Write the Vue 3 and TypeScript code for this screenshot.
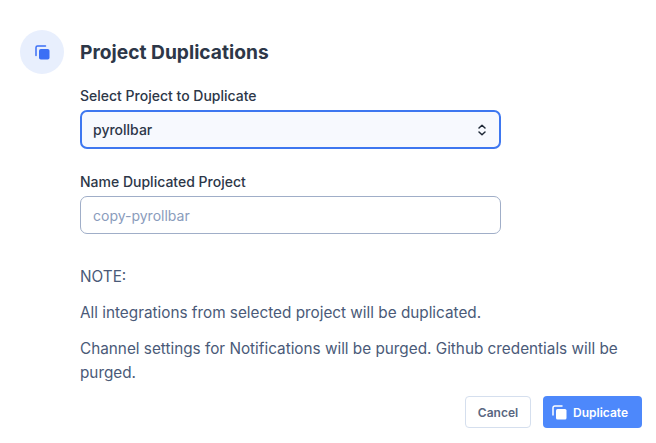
<template>
  <div class="modal">
    <div class="icon-wrap">
      <svg class="head-icon" width="15" height="15" viewBox="0 0 15 15">
        <path d="M1 10.500V2.500A1.500 1.500 0 0 1 2.500 1H10.500" fill="none" stroke="currentColor" stroke-width="1.500" stroke-linecap="round" />
        <rect x="4" y="4" width="10.500" height="10.500" rx="1.800" fill="currentColor" />
      </svg>
    </div>
    <div class="body">
      <h2 class="title">Project Duplications</h2>
      <label class="label">Select Project to Duplicate</label>
      <div class="select">
        <span>pyrollbar</span>
        <svg width="12" height="14" viewBox="0 0 12 14">
          <path d="M3 5L6 2.200L9 5M3 9L6 11.800L9 9" fill="none" stroke="#1f2937" stroke-width="1.500" stroke-linecap="round" stroke-linejoin="round" />
        </svg>
      </div>
      <label class="label second">Name Duplicated Project</label>
      <div class="input">copy-pyrollbar</div>
      <p class="note first">NOTE:</p>
      <p class="note">All integrations from selected project will be duplicated.</p>
      <p class="note">Channel settings for Notifications will be purged. Github credentials will be purged.</p>
    </div>
    <div class="actions">
      <button class="btn cancel">Cancel</button>
      <button class="btn primary">
        <svg width="15" height="15" viewBox="0 0 15 15">
          <path d="M1 10V2.800A1.800 1.800 0 0 1 2.800 1H10" fill="none" stroke="#fff" stroke-width="1.500" stroke-linecap="round" />
          <rect x="4" y="4" width="10.500" height="10.500" rx="1.500" fill="#fff" />
        </svg>
        Duplicate
      </button>
    </div>
  </div>
</template>

<script setup lang="ts">
</script>

<style>
html, body { background: #fff; }
</style>

<style scoped>
.modal {
  position: relative;
  width: 656px;
  height: 443px;
  box-sizing: border-box;
  padding: 30px 30px 0 20px;
  display: flex;
  gap: 16px;
  font-family: Inter, "Liberation Sans", sans-serif;
  background: #fff;
  overflow: hidden;
}
.icon-wrap {
  width: 44px;
  height: 44px;
  border-radius: 50%;
  background: #e8effd;
  color: #3b6ff5;
  display: flex;
  align-items: center;
  justify-content: center;
  flex-shrink: 0;
}
.body { flex: 1; min-width: 0; }
.title {
  margin: 0;
  font-size: 19.200px;
  line-height: 28px;
  font-weight: 700;
  color: #2d3748;
  padding-top: 8px;
}
.label {
  display: block;
  margin-top: 20px;
  font-size: 14px;
  line-height: 20px;
  font-weight: 500;
  color: #2d3748;
}
.label.second { margin-top: 23px; }
.select, .input {
  box-sizing: border-box;
  width: 421px;
  height: 39px;
  margin-top: 4px;
  border-radius: 7px;
  font-size: 14px;
  display: flex;
  align-items: center;
  padding: 0 12px;
}
.select {
  justify-content: space-between;
  background: #f7f9fe;
  border: 2px solid #3e77f0;
  color: #2d3748;
  font-weight: 500;
  padding: 0 11px;
}
.input {
  height: 38px;
  border: 1px solid #a0aec8;
  color: #8a9cbc;
  background: #fff;
}
.note {
  margin: 12px 0 0;
  font-size: 15.300px;
  line-height: 24px;
  color: #4a5a78;
}
.note.first { margin-top: 31px; }
.actions {
  position: absolute;
  right: 14px;
  bottom: 15px;
  display: flex;
  gap: 12px;
}
.btn {
  box-sizing: border-box;
  height: 32px;
  border-radius: 4px;
  font-family: inherit;
  font-size: 12px;
  font-weight: 600;
  display: flex;
  align-items: center;
  justify-content: center;
}
.cancel {
  width: 66px;
  background: #fff;
  border: 1px solid #d5dfee;
  color: #5a6781;
}
.primary {
  width: 99px;
  gap: 6px;
  padding: 0 0 0 9px;
  justify-content: flex-start;
  background: #4d88fb;
  border: none;
  color: #fff;
}
</style>
